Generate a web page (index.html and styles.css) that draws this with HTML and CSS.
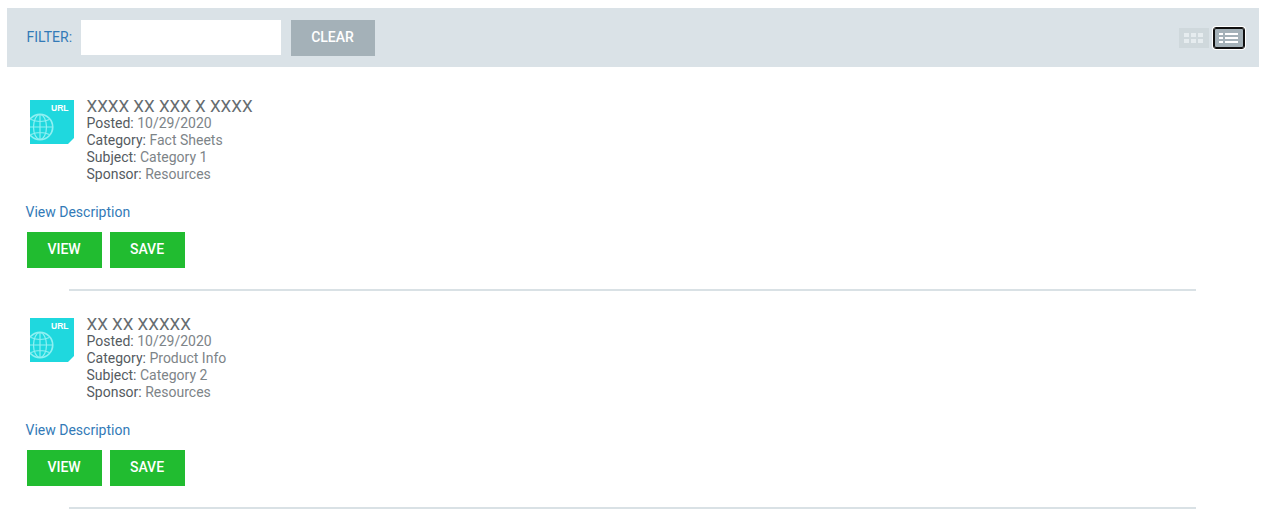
FILE: index.html
```html
<!DOCTYPE html>
<html lang="en">
<head>
  <meta charset="UTF-8">
  <meta name="viewport" content="width=device-width, initial-scale=1.0">
  <title>Resources</title>
  <link rel="stylesheet" href="styles.css">
</head>
<body>
  <svg class="symbols" aria-hidden="true">
    <symbol id="url-icon" viewBox="0 0 44 44">
      <path d="M0 0H44V38L38 44H0Z" fill="#1fd8de"/>
      <g fill="none" stroke="#8ff0f2" stroke-width="1.2">
        <circle cx="10" cy="27" r="12.7" stroke-width="1.7"/>
        <ellipse cx="10" cy="27" rx="6.5" ry="12.5"/>
        <path d="M10 14.5V39.5M0 27H22.5M1 19.5Q10 23.5 19.5 19.5M1 34.5Q10 30.5 19.5 34.5"/>
      </g>
      <text x="21" y="11" class="icon-label">URL</text>
    </symbol>
  </svg>

  <div class="toolbar">
    <label class="filter-label" for="filter">FILTER:</label>
    <input type="text" id="filter" class="filter-input">
    <button class="clear-button">CLEAR</button>
    <div class="view-toggle">
      <button class="toggle-button" aria-label="Grid view">
        <svg width="20" height="10" viewBox="0 0 20 10" fill="#e6ecef">
          <path d="M0 0h5v4H0zM7 0h5v4H7zM14 0h5v4h-5zM0 6h5v4H0zM7 6h5v4H7zM14 6h5v4h-5z"/>
        </svg>
      </button>
      <button class="toggle-button active" aria-label="List view">
        <svg width="20" height="10" viewBox="0 0 20 10" fill="#fff">
          <path d="M0 0h4v2H0zM6 0h13v2H6zM0 4h4v2H0zM6 4h13v2H6zM0 8h4v2H0zM6 8h13v2H6z"/>
        </svg>
      </button>
    </div>
  </div>

  <div class="list">
    <div class="list-item">
      <div class="item-header">
        <svg class="item-icon"><use href="#url-icon"/></svg>
        <div class="item-info">
          <h3>XXXX XX XXX X XXXX</h3>
          <p><span>Posted:</span> 10/29/2020</p>
          <p><span>Category:</span> Fact Sheets</p>
          <p><span>Subject:</span> Category 1</p>
          <p><span>Sponsor:</span> Resources</p>
        </div>
      </div>
      <a class="description-link" href="#">View Description</a>
      <div class="item-actions">
        <button class="action-button">VIEW</button>
        <button class="action-button">SAVE</button>
      </div>
      <hr>
    </div>

    <div class="list-item">
      <div class="item-header">
        <svg class="item-icon"><use href="#url-icon"/></svg>
        <div class="item-info">
          <h3>XX XX XXXXX</h3>
          <p><span>Posted:</span> 10/29/2020</p>
          <p><span>Category:</span> Product Info</p>
          <p><span>Subject:</span> Category 2</p>
          <p><span>Sponsor:</span> Resources</p>
        </div>
      </div>
      <a class="description-link" href="#">View Description</a>
      <div class="item-actions">
        <button class="action-button">VIEW</button>
        <button class="action-button">SAVE</button>
      </div>
      <hr>
    </div>
  </div>
</body>
</html>
```
FILE: styles.css
```css
* {
  margin: 0;
  padding: 0;
  box-sizing: border-box;
}

body {
  padding: 8px 6px 0 7px;
  font-family: Roboto, sans-serif;
  font-size: 14px;
  line-height: 17px;
  color: #7d8488;
  background: #fff;
}

button {
  border: none;
  font-family: inherit;
  cursor: pointer;
}

.symbols {
  display: none;
}

.toolbar {
  display: flex;
  align-items: center;
  height: 59px;
  padding: 0 15px 0 19.5px;
  background: #dae2e7;
}

.filter-label {
  width: 54.5px;
  color: #337ab7;
}

.filter-input {
  width: 200px;
  height: 35px;
  margin-right: 10px;
  padding: 0 10px;
  border: none;
  font-size: 14px;
}

.clear-button {
  width: 84px;
  height: 36px;
  padding: 0 1px 2px 0;
  background: #a4b1b8;
  color: #fff;
  font-size: 14px;
  font-weight: 500;
}

.view-toggle {
  display: flex;
  gap: 5px;
  margin-left: auto;
}

.toggle-button {
  display: flex;
  align-items: center;
  justify-content: center;
  width: 30px;
  height: 20px;
  background: #cfd8dc;
}

.toggle-button.active {
  background: #a4b1b8;
  border: 1px solid #101010;
  border-radius: 2px;
  outline: 1px solid #101010;
  box-shadow: 0 0 0 2px #fff;
}

.list-item {
  padding-top: 25px;
}

.list-item:first-child {
  padding-top: 31px;
}

.item-header {
  display: flex;
  padding-left: 23px;
}

.item-icon {
  width: 44px;
  height: 44px;
  margin: 2px 12.5px 0 0;
}

.icon-label {
  fill: #fff;
  font: bold 8.5px "Liberation Sans", sans-serif;
}

.item-info h3 {
  font-size: 17px;
  font-weight: 400;
  color: #666c70;
}

.item-info span {
  color: #555b5f;
}

.description-link {
  display: block;
  margin: 21px 0 0 18.5px;
  color: #337ab7;
  text-decoration: none;
}

.item-actions {
  display: flex;
  gap: 8px;
  margin: 11px 0 21px 20px;
}

.action-button {
  width: 75px;
  height: 36px;
  padding: 0 1px 2px 0;
  background: #21bc30;
  color: #fff;
  font-size: 14px;
  font-weight: 500;
}

hr {
  height: 2px;
  margin: 0 63px 0 62px;
  border: none;
  background: #d9e1e5;
}
```
